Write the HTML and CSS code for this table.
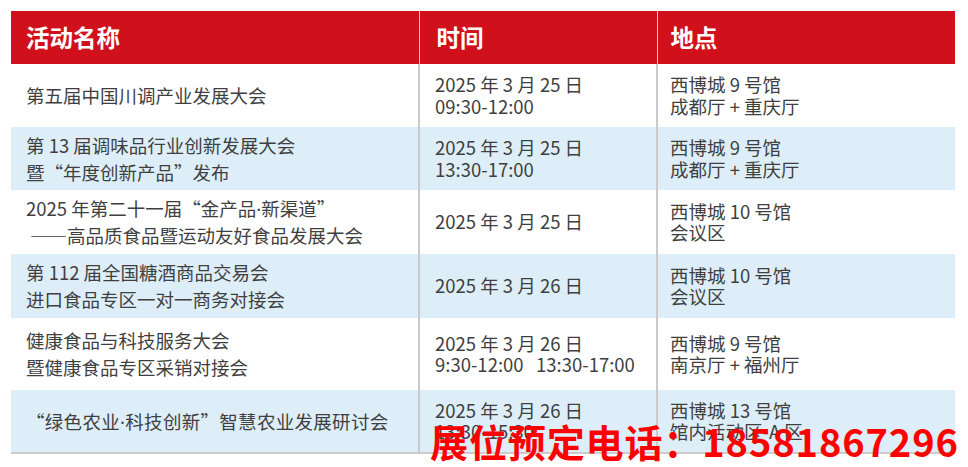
FILE: index.html
```html
<!DOCTYPE html>
<html lang="zh">
<head>
<meta charset="utf-8">
<link rel="stylesheet" href="styles.css">
</head>
<body>
<div class="page">
<table class="sched">
  <colgroup><col class="c1"><col class="c2"><col class="c3"></colgroup>
  <thead>
    <tr><th>活动名称</th><th class="sep">时间</th><th class="sep">地点</th></tr>
  </thead>
  <tbody>
    <tr class="r63">
      <td class="name">第五届中国川调产业发展大会</td>
      <td class="sep">2025 年 3 月 25 日<br>09:30-12:00</td>
      <td class="sep">西博城 9 号馆<br>成都厅 + 重庆厅</td>
    </tr>
    <tr class="alt r63">
      <td class="name">第 13 届调味品行业创新发展大会<br>暨“年度创新产品”发布</td>
      <td class="sep">2025 年 3 月 25 日<br>13:30-17:00</td>
      <td class="sep">西博城 9 号馆<br>成都厅 + 重庆厅</td>
    </tr>
    <tr class="r64">
      <td class="name">2025 年第二十一届“金产品<span class="dot">·</span>新渠道”<br><span class="ind">——高品质食品暨运动友好食品发展大会</span></td>
      <td class="sep">2025 年 3 月 25 日</td>
      <td class="sep">西博城 10 号馆<br>会议区</td>
    </tr>
    <tr class="alt r64">
      <td class="name">第 112 届全国糖酒商品交易会<br>进口食品专区一对一商务对接会</td>
      <td class="sep">2025 年 3 月 26 日</td>
      <td class="sep">西博城 10 号馆<br>会议区</td>
    </tr>
    <tr class="r72">
      <td class="name">健康食品与科技服务大会<br>暨健康食品专区采销对接会</td>
      <td class="sep">2025 年 3 月 26 日<br>9:30-12:00&nbsp;&nbsp; 13:30-17:00</td>
      <td class="sep">西博城 9 号馆<br>南京厅 + 福州厅</td>
    </tr>
    <tr class="alt r63 last">
      <td class="name wide">“绿色农业<span class="dot">·</span>科技创新”智慧农业发展研讨会</td>
      <td class="sep">2025 年 3 月 26 日<br>13:30-15:30</td>
      <td class="sep">西博城 13 号馆<br>馆内活动区-A 区</td>
    </tr>
  </tbody>
</table>
<div class="hotline">展位预定电话：18581867296</div>
</div>
</body>
</html>
```

FILE: styles.css
```css
html, body {
  margin: 0;
  padding: 0;
  background: #ffffff;
}
.page {
  position: relative;
  width: 968px;
  height: 467px;
  overflow: hidden;
  padding: 11px 0 0 11px;
  box-sizing: border-box;
  font-family: "Noto Sans CJK SC", "Noto Sans", sans-serif;
}
.sched {
  width: 944px;
  border-collapse: collapse;
  table-layout: fixed;
}
.c1 { width: 408px; }
.c2 { width: 238px; }
.c3 { width: 298px; }
.sched th {
  height: 53px;
  padding: 0 0 0 15px;
  background: #d0111c;
  color: #ffffff;
  font-size: 23.5px;
  font-weight: 700;
  text-align: left;
  vertical-align: middle;
  line-height: 1;
  box-sizing: border-box;
}
.sched th.sep {
  border-left: 1px solid #f0c9cb;
  padding-left: 17px;
}
.sched th:last-child { padding-left: 13px; }
.sched td {
  padding: 0 0 0 15px;
  color: #3f3f3f;
  font-size: 18.5px;
  line-height: 21.5px;
  vertical-align: middle;
  box-sizing: border-box;
}
.sched td.name { line-height: 27px; }
.sched td.wide { letter-spacing: 0.3px; }
.sched td.sep {
  border-left: 2px solid #cacaca;
  padding-left: 15px;
}
.sched td:last-child { padding-left: 12px; }
.sched tr.alt td { background: #ddeef9; }
.r63 { height: 63px; }
.r64 { height: 64px; }
.r72 { height: 72px; }
.sched tr.last td { border-bottom: 2px solid #cccccc; }
.ind { padding-left: 4px; }
.dot {
  font-family: "Noto Sans", "DejaVu Sans", sans-serif;
}
.hotline {
  position: absolute;
  left: 430px;
  top: 419px;
  color: #ff0000;
  font-size: 38px;
  font-weight: 700;
  line-height: 44px;
  white-space: nowrap;
  letter-spacing: 0.9px;
}
```
